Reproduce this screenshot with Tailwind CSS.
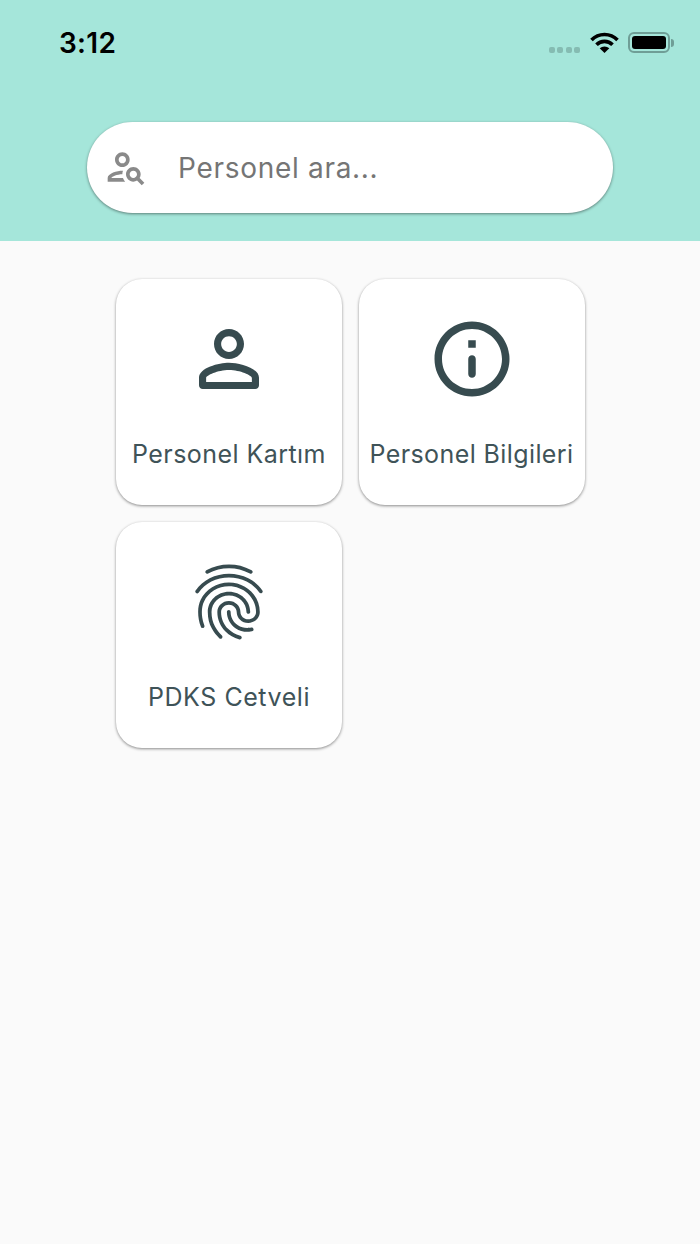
<!DOCTYPE html>
<html><head><meta charset="utf-8">
<script src="https://cdn.jsdelivr.net/npm/@tailwindcss/browser@4"></script>
</head>
<body class="bg-[#fafafa] font-['Inter',sans-serif]">
<div class="w-[700px] h-[1244px] overflow-hidden flex flex-col">
  <header class="h-[241px] bg-[#a5e6da] flex flex-col">
    <div class="h-[86px] flex items-center pl-[59px] pr-[26px]">
      <span class="text-[28px] leading-none font-semibold text-black tracking-[0.3px]">3:12</span>
      <div class="ml-auto flex items-center">
        <div class="flex gap-[2.5px] mt-[14px] mr-[10px]">
          <i class="block w-[6px] h-[6px] rounded-[2px] bg-[#85bcb2]"></i><i class="block w-[6px] h-[6px] rounded-[2px] bg-[#85bcb2]"></i><i class="block w-[6px] h-[6px] rounded-[2px] bg-[#85bcb2]"></i><i class="block w-[6px] h-[6px] rounded-[2px] bg-[#85bcb2]"></i>
        </div>
        <svg width="29" height="21" viewBox="0 0 29 21" class="mr-[9px] mb-[1px]" fill="none"><path d="M1.500 8A18 18 0 0 1 27.500 8" stroke="#000" stroke-width="3.600"/><path d="M6.500 12.800A11 11 0 0 1 22.500 12.800" stroke="#000" stroke-width="3.600"/><path d="M14.500 21L9.700 16.300A7 7 0 0 1 19.300 16.300Z" fill="#000"/></svg>
        <div class="flex items-center mb-[1px]">
          <div class="w-[42px] h-[21px] rounded-[6px] border-[2px] border-[#6f9e96] p-[2px]"><div class="w-full h-full rounded-[3px] bg-black"></div></div>
          <div class="w-[3px] h-[8px] ml-[1px] rounded-r-[3px] bg-[#6f9e96]"></div>
        </div>
      </div>
    </div>
    <div class="mt-[36px] mx-[87px] h-[91px] rounded-full bg-white shadow-[0_1px_3px_rgba(0,0,0,0.45)] flex items-center pl-[16.5px]">
      <svg width="44" height="44" viewBox="0 0 24 24" fill="#8a8a8a" class="mb-[1px]"><path d="M10 12c2.210 0 4-1.790 4-4 0-2.210-1.790-4-4-4S6 5.790 6 8c0 2.210 1.790 4 4 4zm0-6c1.100 0 2 .9 2 2 0 1.100-.9 2-2 2S8 9.100 8 8c0-1.100.9-2 2-2z"/><path d="M4 18c.22-.72 3.310-2 6-2 0-.7.13-1.370.35-1.990C7.620 13.910 2 15.270 2 18v2h9.540c-.52-.58-.93-1.250-1.190-2H4z"/><path d="M19.430 18.020c.36-.59.57-1.280.57-2.020 0-2.210-1.790-4-4-4s-4 1.790-4 4c0 2.210 1.790 4 4 4 .74 0 1.430-.22 2.020-.57L20.590 22 22 20.590l-2.570-2.570zM16 18c-1.100 0-2-.9-2-2 0-1.100.9-2 2-2s2 .9 2 2c0 1.100-.9 2-2 2z"/></svg>
      <span class="ml-[30.5px] mt-[1px] text-[28px] leading-none tracking-[0.7px] text-[#757575]">Personel ara...</span>
    </div>
  </header>
  <main class="pt-[38px] pl-[116px] grid grid-cols-[226px_226px] auto-rows-[226px] gap-[17px]">
    <div class="rounded-[26px] bg-white shadow-[0_1px_3px_rgba(0,0,0,0.45)] flex flex-col items-center pt-[35px]">
      <svg width="90" height="90" viewBox="0 0 24 24" fill="#374b4f"><path d="M12 5.900c1.160 0 2.100.94 2.100 2.100s-.94 2.100-2.100 2.100S9.900 9.160 9.900 8s.94-2.100 2.100-2.100m0 9c2.970 0 6.100 1.460 6.100 2.100v1.100H5.900V17c0-.64 3.130-2.100 6.100-2.100M12 4C9.790 4 8 5.790 8 8s1.790 4 4 4 4-1.790 4-4-1.790-4-4-4zm0 9c-2.670 0-8 1.340-8 4v2c0 .55.45 1 1 1h14c.55 0 1-.45 1-1v-2c0-2.660-5.330-4-8-4z"/></svg>
      <span class="mt-[33.5px] text-[25px] leading-[32px] tracking-[0.45px] text-[#3f5358] whitespace-nowrap">Personel Kartım</span>
    </div>
    <div class="rounded-[26px] bg-white shadow-[0_1px_3px_rgba(0,0,0,0.45)] flex flex-col items-center pt-[35px]">
      <svg width="90" height="90" viewBox="0 0 24 24" fill="#374b4f" class="-ml-[1px]"><path d="M11 7h2v2h-2V7zm1 4c.55 0 1 .45 1 1v4c0 .55-.45 1-1 1s-1-.45-1-1v-4c0-.55.45-1 1-1zm0-9C6.480 2 2 6.480 2 12s4.480 10 10 10 10-4.480 10-10S17.520 2 12 2zm0 18c-4.410 0-8-3.590-8-8s3.590-8 8-8 8 3.590 8 8-3.590 8-8 8z"/></svg>
      <span class="mt-[33.5px] -ml-[1px] text-[25px] leading-[32px] tracking-[0.4px] text-[#3f5358] whitespace-nowrap">Personel Bilgileri</span>
    </div>
    <div class="rounded-[26px] bg-white shadow-[0_1px_3px_rgba(0,0,0,0.45)] flex flex-col items-center pt-[35px]">
      <svg width="90" height="90" viewBox="0 0 24 24" fill="#374b4f"><path d="M17.810 4.470c-.08 0-.16-.02-.23-.06C15.660 3.420 14 3 12.010 3c-1.980 0-3.860.47-5.580 1.410-.24.13-.54.04-.68-.2-.13-.24-.04-.55.2-.68C7.820 2.520 9.860 2 12.010 2c2.130 0 3.990.47 6.030 1.520.25.13.34.43.21.67-.09.18-.26.28-.44.28zM3.500 9.720c-.1 0-.2-.03-.29-.09-.23-.16-.28-.47-.12-.7.99-1.400 2.250-2.500 3.750-3.270C9.980 4.040 14 4.030 17.150 5.650c1.500.77 2.760 1.860 3.750 3.250.16.22.11.54-.12.7-.23.16-.54.11-.7-.12-.9-1.260-2.040-2.250-3.390-2.940-2.870-1.470-6.540-1.470-9.400.01-1.360.7-2.500 1.700-3.400 2.960-.08.14-.23.21-.39.21zm6.250 12.070c-.13 0-.26-.05-.35-.15-.87-.87-1.340-1.430-2.010-2.640-.69-1.230-1.050-2.730-1.050-4.340 0-2.970 2.540-5.390 5.660-5.390s5.660 2.420 5.660 5.390c0 .28-.22.5-.5.5s-.5-.22-.5-.5c0-2.420-2.090-4.390-4.660-4.390s-4.660 1.970-4.660 4.390c0 1.440.32 2.770.93 3.850.64 1.150 1.080 1.640 1.850 2.420.19.2.19.51 0 .71-.11.1-.24.15-.37.15zm7.170-1.850c-1.190 0-2.240-.3-3.100-.89-1.490-1.010-2.380-2.650-2.380-4.390 0-.28.22-.5.5-.5s.5.22.5.5c0 1.410.72 2.740 1.940 3.560.71.48 1.540.71 2.540.71.24 0 .64-.03 1.040-.1.27-.05.53.13.58.41.05.27-.13.53-.41.58-.57.11-1.070.12-1.210.12zM14.910 22c-.04 0-.09-.01-.13-.02-1.590-.44-2.630-1.030-3.720-2.100-1.400-1.390-2.170-3.240-2.170-5.220 0-1.620 1.380-2.940 3.080-2.940 1.700 0 3.080 1.320 3.080 2.940 0 1.070.93 1.940 2.080 1.940s2.080-.87 2.080-1.940c0-3.770-3.250-6.830-7.250-6.830-2.840 0-5.440 1.580-6.610 4.030-.39.81-.59 1.760-.59 2.800 0 .78.07 2.010.67 3.610.1.26-.03.55-.29.64-.26.1-.55-.04-.64-.29-.49-1.310-.73-2.610-.73-3.960 0-1.200.23-2.290.68-3.240 1.330-2.790 4.280-4.600 7.510-4.600 4.550 0 8.250 3.510 8.250 7.830 0 1.620-1.380 2.940-3.080 2.940s-3.080-1.320-3.080-2.940c0-1.070-.93-1.940-2.080-1.940s-2.080.87-2.080 1.940c0 1.710.66 3.310 1.870 4.510.95.94 1.860 1.460 3.270 1.850.27.07.42.35.35.61-.05.23-.26.38-.47.38z"/></svg>
      <span class="mt-[33.5px] text-[25px] leading-[32px] tracking-[0.55px] text-[#3f5358] whitespace-nowrap">PDKS Cetveli</span>
    </div>
  </main>
</div>
</body></html>
